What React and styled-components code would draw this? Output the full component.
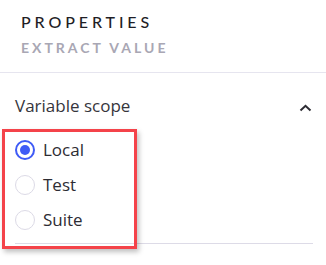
import React, { useState } from "react";
import styled, { createGlobalStyle } from "styled-components";

const GlobalStyle = createGlobalStyle`
  body {
    margin: 0;
    background: #ffffff;
    font-family: "Open Sans", "Liberation Sans", sans-serif;
  }
`;

const Panel = styled.div`
  width: 326px;
  height: 265px;
  position: relative;
  overflow: hidden;
`;

const Header = styled.div`
  padding: 12px 21px 15px;
  border-bottom: 1px solid #e6e5ef;
`;

const Title = styled.div`
  font-family: "Lato", sans-serif;
  font-size: 16px;
  line-height: 20px;
  letter-spacing: 3.9px;
  color: #1f1e26;
  font-weight: 500;
`;

const Subtitle = styled.div`
  font-family: "Lato", sans-serif;
  font-size: 14px;
  line-height: 18px;
  margin-top: 7px;
  letter-spacing: 3px;
  color: #a9a7b4;
  font-weight: 700;
`;

const Section = styled.div`
  margin: 0 13px 0 15px;
  border-bottom: 1px solid #dddbe7;
  padding-bottom: 6px;
`;

const SectionHeader = styled.div`
  display: flex;
  align-items: center;
  justify-content: space-between;
  height: 24px;
  margin-top: 20px;
  margin-bottom: 15px;
  font-size: 17px;
  color: #36353c;
`;

const Chevron = styled.svg`
  margin-right: 1px;
  margin-top: 6px;
`;

const RadioList = styled.div`
  display: flex;
  flex-direction: column;
`;

const RadioRow = styled.label`
  display: flex;
  align-items: center;
  gap: 8px;
  height: 35px;
  font-size: 17px;
  color: #2d2c33;
  cursor: pointer;
`;

const Circle = styled.span`
  box-sizing: border-box;
  width: 20px;
  height: 20px;
  border-radius: 50%;
  border: ${(p) => (p.$checked ? "2px solid #3f5bf6" : "1px solid #dcdae6")};
  display: flex;
  align-items: center;
  justify-content: center;
  &::after {
    content: "";
    display: ${(p) => (p.$checked ? "block" : "none")};
    width: 10px;
    height: 10px;
    border-radius: 50%;
    background: #3f5bf6;
  }
`;

const Highlight = styled.div`
  position: absolute;
  left: 2px;
  top: 129px;
  width: 135px;
  height: 120px;
  box-sizing: border-box;
  border: 3px solid #f4434a;
  box-shadow: 2px 3px 5px rgba(0, 0, 0, 0.25);
  pointer-events: none;
`;

const options = ["Local", "Test", "Suite"];

export default function App() {
  const [scope, setScope] = useState("Local");
  return (
    <Panel>
      <GlobalStyle />
      <Header>
        <Title>PROPERTIES</Title>
        <Subtitle>EXTRACT VALUE</Subtitle>
      </Header>
      <Section>
        <SectionHeader>
          <span>Variable scope</span>
          <Chevron width="13" height="8" viewBox="0 0 13 8" fill="none">
            <path d="M1.5 6.5 L6.5 1.8 L11.5 6.5" stroke="#2d2c33" strokeWidth="2" />
          </Chevron>
        </SectionHeader>
        <RadioList>
          {options.map((o) => (
            <RadioRow key={o} onClick={() => setScope(o)}>
              <Circle $checked={scope === o} />
              {o}
            </RadioRow>
          ))}
        </RadioList>
      </Section>
      <Highlight />
    </Panel>
  );
}
